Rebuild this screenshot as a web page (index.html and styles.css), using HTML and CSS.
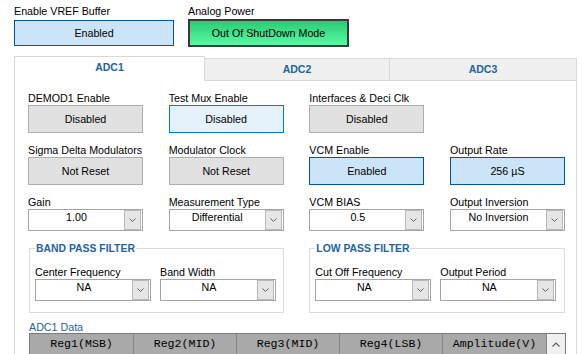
FILE: index.html
```html
<!DOCTYPE html>
<html lang="en">
<head>
<meta charset="UTF-8">
<meta name="viewport" content="width=device-width, initial-scale=1.0">
<title>ADC Settings</title>
<link rel="stylesheet" href="styles.css">
</head>
<body>

<div class="top">
    <div class="field vref">
        <div class="lbl">Enable VREF Buffer</div>
        <div class="btn on">Enabled</div>
    </div>
    <div class="field power">
        <div class="lbl">Analog Power</div>
        <div class="btn green">Out Of ShutDown Mode</div>
    </div>
</div>

<div class="tabs">
    <div class="tab active t1">ADC1</div>
    <div class="tab t2">ADC2</div>
    <div class="tab t3">ADC3</div>
</div>

<div class="panel">
    <div class="grid">
        <div class="field">
            <div class="lbl">DEMOD1 Enable</div>
            <div class="btn">Disabled</div>
        </div>
        <div class="field">
            <div class="lbl">Test Mux Enable</div>
            <div class="btn hover">Disabled</div>
        </div>
        <div class="field">
            <div class="lbl">Interfaces &amp; Deci Clk</div>
            <div class="btn">Disabled</div>
        </div>
        <div class="field"></div>

        <div class="field">
            <div class="lbl">Sigma Delta Modulators</div>
            <div class="btn">Not Reset</div>
        </div>
        <div class="field">
            <div class="lbl">Modulator Clock</div>
            <div class="btn">Not Reset</div>
        </div>
        <div class="field">
            <div class="lbl">VCM Enable</div>
            <div class="btn on">Enabled</div>
        </div>
        <div class="field">
            <div class="lbl">Output Rate</div>
            <div class="btn on">256 &micro;S</div>
        </div>

        <div class="field">
            <div class="lbl">Gain</div>
            <div class="combo"><span class="val">1.00</span><span class="drop"><svg width="7" height="4" viewBox="0 0 7 4"><polyline points="0.5,0.5 3.5,3.5 6.5,0.5" fill="none" stroke="#606060" stroke-width="1"/></svg></span></div>
        </div>
        <div class="field">
            <div class="lbl">Measurement Type</div>
            <div class="combo"><span class="val">Differential</span><span class="drop"><svg width="7" height="4" viewBox="0 0 7 4"><polyline points="0.5,0.5 3.5,3.5 6.5,0.5" fill="none" stroke="#606060" stroke-width="1"/></svg></span></div>
        </div>
        <div class="field">
            <div class="lbl">VCM BIAS</div>
            <div class="combo"><span class="val">0.5</span><span class="drop"><svg width="7" height="4" viewBox="0 0 7 4"><polyline points="0.5,0.5 3.5,3.5 6.5,0.5" fill="none" stroke="#606060" stroke-width="1"/></svg></span></div>
        </div>
        <div class="field">
            <div class="lbl">Output Inversion</div>
            <div class="combo"><span class="val">No Inversion</span><span class="drop"><svg width="7" height="4" viewBox="0 0 7 4"><polyline points="0.5,0.5 3.5,3.5 6.5,0.5" fill="none" stroke="#606060" stroke-width="1"/></svg></span></div>
        </div>

        <fieldset class="group bp">
            <legend>BAND PASS FILTER</legend>
            <div class="pair">
                <div class="field">
                    <div class="lbl">Center Frequency</div>
                    <div class="combo"><span class="val">NA</span><span class="drop"><svg width="7" height="4" viewBox="0 0 7 4"><polyline points="0.5,0.5 3.5,3.5 6.5,0.5" fill="none" stroke="#606060" stroke-width="1"/></svg></span></div>
                </div>
                <div class="field">
                    <div class="lbl">Band Width</div>
                    <div class="combo"><span class="val">NA</span><span class="drop"><svg width="7" height="4" viewBox="0 0 7 4"><polyline points="0.5,0.5 3.5,3.5 6.5,0.5" fill="none" stroke="#606060" stroke-width="1"/></svg></span></div>
                </div>
            </div>
        </fieldset>
        <fieldset class="group">
            <legend>LOW PASS FILTER</legend>
            <div class="pair">
                <div class="field">
                    <div class="lbl">Cut Off Frequency</div>
                    <div class="combo"><span class="val">NA</span><span class="drop"><svg width="7" height="4" viewBox="0 0 7 4"><polyline points="0.5,0.5 3.5,3.5 6.5,0.5" fill="none" stroke="#606060" stroke-width="1"/></svg></span></div>
                </div>
                <div class="field">
                    <div class="lbl">Output Period</div>
                    <div class="combo"><span class="val">NA</span><span class="drop"><svg width="7" height="4" viewBox="0 0 7 4"><polyline points="0.5,0.5 3.5,3.5 6.5,0.5" fill="none" stroke="#606060" stroke-width="1"/></svg></span></div>
                </div>
            </div>
        </fieldset>
    </div>

    <div class="data">
        <div class="data-title">ADC1 Data</div>
        <div class="thead">
            <div class="th wide">Reg1(MSB)</div>
            <div class="th">Reg2(MID)</div>
            <div class="th">Reg3(MID)</div>
            <div class="th">Reg4(LSB)</div>
            <div class="th wide">Amplitude(V)</div>
            <div class="scroll"><svg width="8" height="5" viewBox="0 0 8 5"><polyline points="0.5,4.5 4,1 7.5,4.5" fill="none" stroke="#606060" stroke-width="1.2"/></svg></div>
        </div>
    </div>
</div>

</body>
</html>
```

FILE: styles.css
```css
/* ADC settings panel */
html, body {
    margin: 0;
    height: 354px;
    overflow: hidden;
    background: #fff;
}
body {
    font-family: "Liberation Sans", Arial, sans-serif;
    font-size: 10.7px;
    color: #000;
}
.lbl {
    line-height: 13px;
    white-space: nowrap;
}
.btn {
    box-sizing: border-box;
    height: 28px;
    border: 1px solid #adadad;
    background: #e1e1e1;
    display: flex;
    align-items: center;
    justify-content: center;
    white-space: nowrap;
}
.btn.on {
    background: #cce4f7;
    border-color: #005499;
}
.btn.hover {
    background: #e5f1fb;
    border-color: #0078d7;
}

/* top row */
.top {
    display: flex;
    gap: 14px;
    padding: 5px 0 0 14px;
    height: 42px;
}
.vref { width: 160px; }
.vref .lbl { margin-bottom: 2px; }
.vref .btn { height: 26px; }
.power { width: 161px; }
.power .lbl { margin-bottom: 1px; }
.btn.green {
    border: 2px solid #3a3a3a;
    background: linear-gradient(#26cd74, #5cf8a3);
}

/* tabs */
.tabs {
    display: flex;
    align-items: flex-end;
    margin: 9px 0 0 14px;
    width: 563px;
    height: 25px;
}
.tab {
    box-sizing: border-box;
    height: 23px;
    padding-top: 4px;
    line-height: 13px;
    border: 1px solid #d9d9d9;
    border-left: none;
    background: #f0f0f0;
    text-align: center;
    font-weight: bold;
    font-size: 10.5px;
    color: #1e64a0;
}
.tab.active {
    height: 25px;
    border-left: 1px solid #d9d9d9;
    border-bottom: none;
    background: #fff;
}
.t1 { width: 191px; }
.t2 { width: 185px; }
.t3 { width: 187px; }

/* tab page, cut off by the window bottom */
.panel {
    box-sizing: border-box;
    width: 563px;
    height: 273px;
    margin-left: 14px;
    border: 1px solid #d9d9d9;
    border-top: none;
    border-bottom: none;
    padding: 11px 0 0 13px;
    overflow: hidden;
}
.grid {
    display: grid;
    grid-template-columns: repeat(4, 115px);
    column-gap: 25.67px;
    row-gap: 11px;
}

/* combo boxes */
.combo {
    box-sizing: border-box;
    height: 22px;
    border: 1px solid #a6a6a6;
    background: #fff;
    display: flex;
}
.combo .val {
    flex: 1;
    text-align: center;
    line-height: 15px;
    white-space: nowrap;
}
.combo .drop {
    box-sizing: border-box;
    width: 17px;
    margin-right: 1px;
    border: 1px solid #b9b9b9;
    background: #e6e6e6;
    display: flex;
    align-items: center;
    justify-content: center;
}

/* filter groups */
.group {
    grid-column: span 2;
    margin: 0;
    min-width: 0;
    border: 1px solid #dcdcdc;
    padding: 11px 5px 11px 5px;
}
.group.bp { margin-left: 1px; }
.group legend {
    padding: 0 1px;
    line-height: 13px;
    font-size: 10.4px;
    font-weight: bold;
    color: #1e64a0;
}
.pair {
    display: grid;
    grid-template-columns: 116px 116px;
    column-gap: 9px;
}

/* data table */
.data {
    width: 537px;
    margin: 8px 0 0 1px;
}
.data-title {
    line-height: 12px;
    color: #1e64a0;
}
.thead {
    box-sizing: border-box;
    display: flex;
    height: 21px;
    border: 1px solid #7a7a7a;
    border-bottom: none;
}
.th {
    box-sizing: border-box;
    width: 103px;
    border-right: 1px solid #858585;
    background: #a9a9a9;
    font-family: "Liberation Mono", "Courier New", monospace;
    font-size: 11.6px;
    line-height: 20px;
    text-align: center;
    white-space: nowrap;
}
.th.wide { width: 104px; }
.scroll {
    flex: 1;
    background: #f0f0f0;
    display: flex;
    align-items: center;
    justify-content: center;
}
```
